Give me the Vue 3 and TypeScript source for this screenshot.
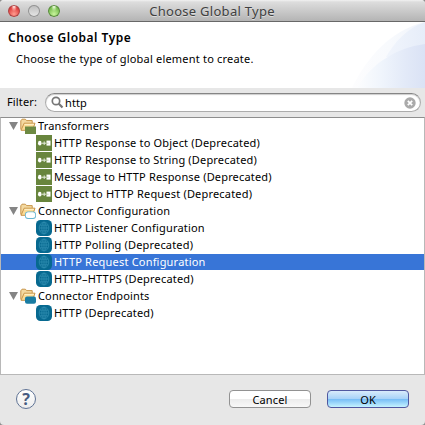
<script setup lang="ts">
import { ref } from 'vue'

type Kind = 'transformer' | 'config' | 'endpoint'
interface Item { label: string; spacing: number }
interface Group { label: string; kind: Kind; spacing: number; items: Item[] }

const filter = ref('http')
const selected = ref('HTTP Request Configuration')

const groups: Group[] = [
  {
    label: 'Transformers', kind: 'transformer', spacing: 0.15,
    items: [
      { label: 'HTTP Response to Object (Deprecated)', spacing: 0.18 },
      { label: 'HTTP Response to String (Deprecated)', spacing: 0.17 },
      { label: 'Message to HTTP Response (Deprecated)', spacing: 0.16 },
      { label: 'Object to HTTP Request (Deprecated)', spacing: 0.19 },
    ],
  },
  {
    label: 'Connector Configuration', kind: 'config', spacing: 0.18,
    items: [
      { label: 'HTTP Listener Configuration', spacing: 0.18 },
      { label: 'HTTP Polling (Deprecated)', spacing: 0.17 },
      { label: 'HTTP Request Configuration', spacing: 0.2 },
      { label: 'HTTP–HTTPS (Deprecated)', spacing: 0.19 },
    ],
  },
  {
    label: 'Connector Endpoints', kind: 'endpoint', spacing: 0.15,
    items: [{ label: 'HTTP (Deprecated)', spacing: 0.18 }],
  },
]
</script>

<template>
  <div class="window">
    <header class="titlebar">
      <div class="lights">
        <i class="light red"></i><i class="light gray"></i><i class="light green"></i>
      </div>
      <span class="title">Choose Global Type</span>
    </header>

    <section class="banner">
      <svg class="swoosh" width="75" height="66" viewBox="0 0 75 66">
        <defs>
          <linearGradient id="outer" x1="0" x2="1" y1="0" y2="0">
            <stop offset="0" stop-color="#fdfdfe" /><stop offset=".5" stop-color="#f8fafd" /><stop offset="1" stop-color="#f0f4fb" />
          </linearGradient>
          <linearGradient id="mid" x1="0" x2="1" y1="0" y2="0">
            <stop offset="0" stop-color="#f1f5fc" /><stop offset="1" stop-color="#e6edf9" />
          </linearGradient>
          <linearGradient id="inner" x1="0" x2="1" y1="0" y2="0">
            <stop offset="0" stop-color="#fcfdfe" /><stop offset=".35" stop-color="#f0f5fc" /><stop offset=".7" stop-color="#e3eaf8" /><stop offset="1" stop-color="#dae2f5" />
          </linearGradient>
        </defs>
        <path d="M2 66C15 38 40 8 75 0V66Z" fill="url(#outer)" />
        <path d="M36 35C44 21 57 6 75 0V40Z" fill="url(#mid)" />
        <path d="M7 66C20 43 45 26 75 22V66Z" fill="url(#inner)" />
      </svg>
      <h1>Choose Global Type</h1>
      <p>Choose the type of global element to create.</p>
    </section>

    <section class="filter">
      <label for="filter">Filter:</label>
      <div class="search">
        <svg class="glass" width="13" height="13" viewBox="0 0 13 13">
          <circle cx="5" cy="5" r="3.7" fill="none" stroke="#777" stroke-width="1.7" />
          <path d="M7.8 7.8 11.5 11.5" stroke="#777" stroke-width="2.2" />
        </svg>
        <input id="filter" v-model="filter" spellcheck="false" />
        <svg class="clear" width="12" height="12" viewBox="0 0 12 12" @click="filter = ''">
          <circle cx="6" cy="6" r="5.7" fill="#aaa" />
          <path d="M3.8 3.8 8.2 8.2M8.2 3.8 3.8 8.2" stroke="#fff" stroke-width="1.7" />
        </svg>
      </div>
    </section>

    <main class="tree">
      <template v-for="group in groups" :key="group.label">
        <div class="row group">
          <svg class="arrow" width="9" height="8" viewBox="0 0 9 8"><path d="M0 0H9L4.5 8Z" fill="#858585" /></svg>
          <svg class="folder" width="16" height="16" viewBox="0 0 16 16">
            <path d="M.8 11.5V2.8L2 1.2H5.2L6.8 2.6H12.2V5" fill="#f3d9a0" stroke="#c8954a" />
            <path d="M1 12.3 4.2 5.2H15L12.5 12.3Z" fill="#fbdc96" stroke="#c8954a" />
            <path d="M4.6 6.4H14" stroke="#fff0c8" />
            <rect v-if="group.kind === 'transformer'" x="5" y="8.5" width="11" height="7.5" fill="#6d8a42" />
            <template v-else-if="group.kind === 'config'">
              <rect x="5" y="8.5" width="11" height="7.5" rx="3" fill="#65b6d2" />
              <rect x="5.8" y="9.3" width="9.4" height="5.7" rx="2.5" fill="#fff" />
            </template>
            <rect v-else x="5" y="8.5" width="11" height="7.2" rx="2" fill="#197ca2" />
          </svg>
          <span class="label" :style="{ letterSpacing: group.spacing + 'px' }">{{ group.label }}</span>
        </div>
        <div
          v-for="item in group.items"
          :key="item.label"
          class="row item"
          :class="{ selected: item.label === selected }"
          @click="selected = item.label"
        >
          <svg v-if="group.kind === 'transformer'" class="icon" width="16" height="16" viewBox="0 0 16 16">
            <rect width="16" height="16" fill="#68853d" />
            <ellipse cx="3.8" cy="8.2" rx="1.8" ry="2.4" fill="#fff" />
            <path d="M6 8.2H10M8.2 6.4V10" stroke="#e5ebdc" />
            <rect x="10.5" y="5.6" width="4" height="5" fill="#fff" />
            <path d="M11 8.2H12.6" stroke="#b6c4a0" stroke-width=".8" />
          </svg>
          <svg v-else class="icon" width="16" height="16" viewBox="0 0 16 16">
            <rect width="16" height="16" rx="4.5" fill="#076990" />
            <g fill="none" stroke="#2f8db0" stroke-width=".8">
              <ellipse cx="8" cy="8" rx="4.8" ry="5.9" /><ellipse cx="8" cy="8" rx="2.2" ry="5.9" />
              <path d="M8 2V14M3.2 8H12.8M4 5.2H12M4 10.8H12" />
            </g>
          </svg>
          <span class="label" :style="{ letterSpacing: item.spacing + 'px' }">{{ item.label }}</span>
        </div>
      </template>
    </main>

    <footer class="footer">
      <button class="help" aria-label="Help">?</button>
      <button class="push">Cancel</button>
      <button class="push default">OK</button>
    </footer>
  </div>
</template>

<style>
body { margin: 0; background: #8d8d8d; overflow: hidden; }
</style>

<style scoped>
* { box-sizing: border-box; }
.window {
  width: 425px; height: 425px; display: flex; flex-direction: column; overflow: hidden;
  background: #e7e7e7; border-radius: 4px;
  font: 11px/16px "Noto Sans", "Open Sans", sans-serif; color: #000;
}
.titlebar {
  position: relative; flex: none; height: 22px; display: flex; align-items: center; justify-content: center;
  background: linear-gradient(#f2f2f2 0, #dddddd 2px, #b4b4b4 21px); border-bottom: 1px solid #686868;
}
.lights { position: absolute; left: 8px; top: 5px; display: flex; gap: 8px; }
.light { width: 12px; height: 12px; border-radius: 50%; }
.red { background: radial-gradient(ellipse at 50% 12%, #fff 0, #f9a5a0 15%, transparent 35%), radial-gradient(circle at 50% 75%, #ff9d90, #df3f3e 60%, #a63434); box-shadow: inset 0 0 0 1px #a74546; }
.gray { background: linear-gradient(#bbb, #e8e8e8); box-shadow: inset 0 0 0 1px #929292; }
.green { background: radial-gradient(ellipse at 50% 12%, #fff 0, #c0e7a3 15%, transparent 35%), radial-gradient(circle at 50% 75%, #c8f49c, #78bd4f 60%, #4b8735); box-shadow: inset 0 0 0 1px #56863d; }
.title { margin-right: 1px; font-size: 13px; letter-spacing: .28px; color: #404040; text-shadow: 0 1px #ddd; white-space: nowrap; }
.banner { position: relative; flex: none; height: 66px; padding: 7px 8px 0; background: #fff; }
.swoosh { position: absolute; right: 0; top: 0; }
h1, p { position: relative; margin: 0; white-space: nowrap; }
h1 { font-size: 12px; line-height: 17px; font-weight: 600; letter-spacing: .49px; }
p { padding: 5px 0 0 8px; letter-spacing: .2px; }
.filter { flex: none; height: 29px; display: flex; align-items: flex-start; padding: 5px 4px 0 7px; }
.filter label { width: 38px; line-height: 18px; letter-spacing: .15px; }
.search {
  flex: 1; height: 19px; display: flex; align-items: center; padding: 0 4px 0 5px;
  background: #fff; border: 1px solid #acacac; border-top-color: #858585; border-radius: 10px;
  box-shadow: inset 0 1px 1px #ccc;
}
.glass, .clear { flex: none; }
.search input {
  flex: 1; min-width: 0; height: 16px; margin-left: 1px; padding: 0; border: 0; outline: 0; background: transparent;
  font: inherit; letter-spacing: .1px;
}
.tree { flex: none; height: 258px; background: #fff; border: 1px solid #b8b8b8; border-top-color: #8e8e8e; }
.row { height: 17px; display: flex; align-items: flex-start; white-space: nowrap; }
.group { padding-left: 8px; }
.arrow { margin-top: 4px; }
.folder { margin-left: 2px; }
.item { padding-left: 35px; }
.label { margin-left: 2px; line-height: 16px; }
.selected { height: 16px; margin-bottom: 1px; background: #3875d7; color: #fff; }
.footer { flex: 1; display: flex; align-items: flex-start; padding: 14px 16px 0; }
.help {
  width: 20px; height: 20px; margin-right: auto; padding: 0; border: 1px solid #5f7395; border-radius: 50%;
  background: linear-gradient(#fff, #ededed); color: #465b81; font: bold 16px/18px "Noto Sans", sans-serif;
}
.push {
  width: 82px; height: 18px; margin-top: 1px; padding: 0; border: 1px solid #929292; border-radius: 4px;
  background: linear-gradient(#fff 0 50%, #ececec 51%, #f8f8f8); color: #000;
  font: 11px/15px "Noto Sans", sans-serif; letter-spacing: .15px;
}
.default { margin-left: 16px; border-color: #5058a0; background: linear-gradient(#d8ebfb, #a7d2f8 49%, #76bdf6 51%, #c5f3ff); }
</style>
